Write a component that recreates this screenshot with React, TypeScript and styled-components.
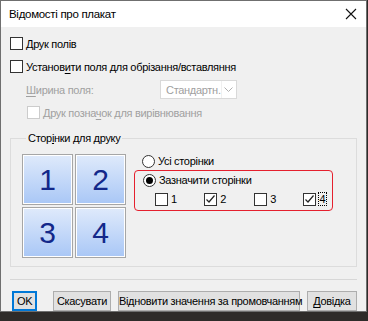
import React from "react";
import styled, { createGlobalStyle } from "styled-components";

const FONT = `"Liberation Sans", Arial, sans-serif`;

const Global = createGlobalStyle`
  html, body {
    margin: 0;
    padding: 0;
    background: #2e2b29;
  }
  body {
    font-family: ${FONT};
    font-size: 11px;
    letter-spacing: -0.3px;
    color: #000;
  }
`;

const Window = styled.div`
  width: 365px;
  height: 310px;
  border: 1px solid #6f6f6f;
  background: #f0f0f0;
  display: flex;
  flex-direction: column;
  box-sizing: content-box;
`;

const TitleBar = styled.div`
  height: 26px;
  background: #fff;
  display: flex;
  align-items: center;
  justify-content: space-between;
  padding: 0 9px 0 8px;
  font-size: 11.5px;
`;

const Body = styled.div`
  flex: 1;
  display: flex;
  flex-direction: column;
  padding: 5px 9px 0 9px;
`;

const Row = styled.div<{ $indent?: number }>`
  height: 23px;
  display: flex;
  align-items: center;
  padding-left: ${p => p.$indent ?? 0}px;
`;

const Box = styled.span<{ $disabled?: boolean }>`
  width: 11px;
  height: 11px;
  border: 1px solid ${p => (p.$disabled ? "#cccccc" : "#333")};
  background: #fff;
  display: inline-flex;
  align-items: center;
  justify-content: center;
  margin-right: 3px;
  flex-shrink: 0;
`;

const Label = styled.span<{ $disabled?: boolean }>`
  color: ${p => (p.$disabled ? "#a0a0a0" : "#000")};
  white-space: nowrap;
  u {
    text-decoration: underline;
    text-underline-offset: 2px;
  }
`;

const Select = styled.div`
  margin-left: auto;
  margin-right: 120px;
  width: 77px;
  height: 19px;
  border: 1px solid #d9d9d9;
  background: #fff;
  display: flex;
  align-items: center;
  color: #a0a0a0;
  padding-left: 5px;
  box-sizing: border-box;
  span {
    flex: 1;
    white-space: nowrap;
  }
`;

const Arrow = styled.div`
  width: 18px;
  height: 100%;
  display: flex;
  align-items: center;
  justify-content: center;
  border-left: 1px solid #f0f0f0;
`;

const Group = styled.fieldset`
  margin: 8px 0 0 0;
  padding: 10px 0 0 11px;
  border: 1px solid #dcdcdc;
  height: 135px;
  display: flex;
  gap: 8px;
  box-sizing: border-box;
  legend {
    padding: 0 2px;
    margin-left: 4px;
    line-height: 12px;
  }
`;

const Grid = styled.div`
  display: grid;
  grid-template-columns: 51px 51px;
  grid-template-rows: 51px 51px;
  gap: 2px;
`;

const Tile = styled.div`
  box-sizing: border-box;
  border: 1px solid #a6a6a6;
  box-shadow: inset 0 0 0 1px #fff;
  background: linear-gradient(#dfeafb, #a9c7f6);
  display: flex;
  align-items: center;
  justify-content: center;
  font-family: ${FONT};
  font-size: 30px;
  letter-spacing: 0;
  color: #13288a;
`;

const Options = styled.div`
  display: flex;
  flex-direction: column;
  margin-top: -1px;
`;

const RadioRow = styled.div`
  display: flex;
  align-items: center;
  height: 16px;
  padding-left: 8px;
`;

const Radio = styled.span<{ $on?: boolean }>`
  width: 11px;
  height: 11px;
  border: 1px solid #333;
  border-radius: 50%;
  background: #fff;
  margin-right: 3px;
  display: inline-flex;
  align-items: center;
  justify-content: center;
  &::after {
    content: "";
    width: 7px;
    height: 7px;
    border-radius: 50%;
    background: ${p => (p.$on ? "#000" : "transparent")};
  }
`;

const Highlight = styled.div`
  width: 199px;
  height: 41px;
  box-sizing: border-box;
  border: 1.5px solid #e5202e;
  border-radius: 4px;
  display: flex;
  flex-direction: column;
  padding-top: 1px;
  margin-top: 1px;
`;

const PageRow = styled.div`
  display: flex;
  align-items: center;
  margin-top: 3px;
  padding-left: 20px;
  height: 16px;
`;

const PageItem = styled.div<{ $w: number }>`
  width: ${p => p.$w}px;
  display: flex;
  align-items: center;
`;

const FocusText = styled.span`
  outline: 1px dotted #000;
  outline-offset: 0;
  padding: 0 1px;
`;

const Separator = styled.div`
  margin-top: 12px;
  border-top: 1px solid #d7d7d7;
`;

const Buttons = styled.div`
  display: flex;
  margin-top: 11px;
  padding-left: 2px;
  gap: 7px;
`;

const Button = styled.button<{ $w: number; $focus?: boolean }>`
  width: ${p => p.$w}px;
  height: 20px;
  box-sizing: border-box;
  background: #e1e1e1;
  border: 1px solid ${p => (p.$focus ? "#0078d7" : "#adadad")};
  box-shadow: ${p => (p.$focus ? "inset 0 0 0 1px #0078d7" : "none")};
  margin-right: ${p => (p.$focus ? 9 : 0)}px;
  font-family: ${FONT};
  font-size: 11px;
  letter-spacing: -0.3px;
  padding: 0;
  color: #000;
  white-space: nowrap;
  u {
    text-underline-offset: 2px;
  }
`;

const Check = () => (
  <svg width="11" height="11" viewBox="0 0 11 11">
    <path d="M1.5 5.5 L4 8 L9.5 1.5" fill="none" stroke="#222" strokeWidth="1.2" />
  </svg>
);

export default function App() {
  const pages = [
    { n: "1", on: false, w: 50 },
    { n: "2", on: true, w: 51 },
    { n: "3", on: false, w: 49 },
    { n: "4", on: true, w: 30 },
  ];
  return (
    <>
      <Global />
      <Window>
        <TitleBar>
          <span>Відомості про плакат</span>
          <svg width="12" height="12" viewBox="0 0 12 12">
            <path d="M1 1 L11 11 M11 1 L1 11" stroke="#111" strokeWidth="1.1" />
          </svg>
        </TitleBar>
        <Body>
          <Row>
            <Box />
            <Label><u>Д</u>рук полів</Label>
          </Row>
          <Row>
            <Box />
            <Label>Установ<u>и</u>ти поля для обрізання/вставляння</Label>
          </Row>
          <Row $indent={16}>
            <Label $disabled><u>Ш</u>ирина поля:</Label>
            <Select>
              <span>Стандартн.</span>
              <Arrow>
                <svg width="9" height="5" viewBox="0 0 9 5">
                  <path d="M0.5 0.5 L4.5 4.5 L8.5 0.5" fill="none" stroke="#b0b0b0" />
                </svg>
              </Arrow>
            </Select>
          </Row>
          <Row $indent={17}>
            <Box $disabled />
            <Label $disabled>Друк позна<u>ч</u>ок для вирівнювання</Label>
          </Row>
          <Group>
            <legend>Стор<u>і</u>нки для друку</legend>
            <Grid>
              <Tile>1</Tile>
              <Tile>2</Tile>
              <Tile>3</Tile>
              <Tile>4</Tile>
            </Grid>
            <Options>
              <RadioRow>
                <Radio />
                <Label>Усі сторінки</Label>
              </RadioRow>
              <Highlight>
                <RadioRow>
                  <Radio $on />
                  <Label>Зазначити сторінки</Label>
                </RadioRow>
                <PageRow>
                  {pages.map(p => (
                    <PageItem key={p.n} $w={p.w}>
                      <Box>{p.on && <Check />}</Box>
                      {p.n === "4" ? <FocusText>{p.n}</FocusText> : <Label>{p.n}</Label>}
                    </PageItem>
                  ))}
                </PageRow>
              </Highlight>
            </Options>
          </Group>
          <Separator />
          <Buttons>
            <Button $w={26} $focus>OK</Button>
            <Button $w={60}>Скасувати</Button>
            <Button $w={182}>Відновити значення за промовчанням</Button>
            <Button $w={52}><u>Д</u>овідка</Button>
          </Buttons>
        </Body>
      </Window>
    </>
  );
}
